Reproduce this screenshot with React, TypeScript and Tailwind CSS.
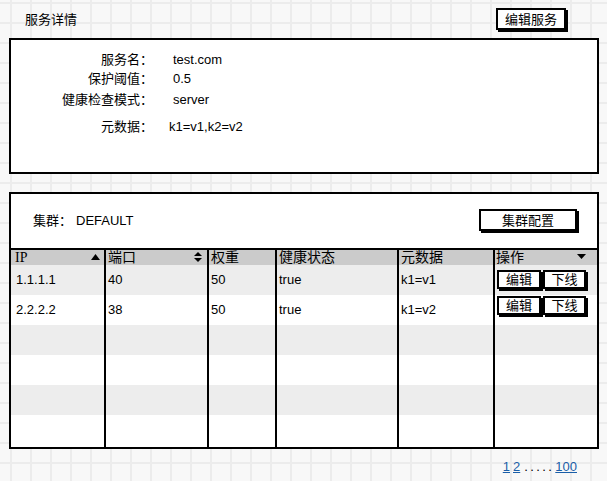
import React from 'react'

const cols = 'grid grid-cols-[93px_103px_68px_122px_96px_104px]'

const rows = [
  { ip: '1.1.1.1', port: '40', weight: '50', health: 'true', meta: 'k1=v1', btnTop: 'mt-[5px]' },
  { ip: '2.2.2.2', port: '38', weight: '50', health: 'true', meta: 'k1=v2', btnTop: 'mt-[1px]' },
]

function SmallBtn({ label, className }: { label: string; className?: string }) {
  return (
    <div
      className={`h-[19px] border-2 border-black bg-white shadow-[2px_2px_0_#000] flex items-center justify-center text-[13px] leading-none ${className || ''}`}
    >
      {label}
    </div>
  )
}

function Up() {
  return (
    <svg width="9" height="6" viewBox="0 0 9 6">
      <path d="M0 6 L4.5 0 L9 6 Z" fill="#000" />
    </svg>
  )
}

function Down() {
  return (
    <svg width="9" height="5" viewBox="0 0 9 5">
      <path d="M0 0 L9 0 L4.5 5 Z" fill="#000" />
    </svg>
  )
}

function UpDown() {
  return (
    <svg width="8" height="10" viewBox="0 0 8 10">
      <path d="M0 4 L4 0 L8 4 Z" fill="#000" />
      <path d="M0 6 L8 6 L4 10 Z" fill="#000" />
    </svg>
  )
}

export default function App() {
  const empty = [0, 1, 2, 3]

  return (
    <div className="w-[607px] h-[481px] overflow-hidden bg-[#f8f8f8] bg-[linear-gradient(to_right,#ececec_2px,transparent_2px),linear-gradient(to_bottom,#ececec_2px,transparent_2px)] bg-[size:20px_20px] bg-[position:10px_2px] text-black font-['Liberation_Sans','Noto_Sans_CJK_SC',sans-serif]">
      {/* 标题 */}
      <div className="flex items-start h-[38px]">
        <div className="ml-[25px] mt-[11px] text-[13px] leading-[18px]">服务详情</div>
        <button className="ml-auto mr-[41px] mt-[8px] w-[70px] h-[22px] border-2 border-black bg-white shadow-[2px_2px_0_#000] text-[13px] leading-none">
          编辑服务
        </button>
      </div>

      {/* 服务信息 */}
      <div className="ml-[9px] w-[590px] h-[136px] border-2 border-black bg-white pt-[10px] text-[13px]">
        <div className="flex h-[19px] items-center">
          <div className="w-[142px] text-right">服务名：</div>
          <div className="ml-[20px]">test.com</div>
        </div>
        <div className="flex h-[19px] items-center">
          <div className="w-[142px] text-right">保护阈值：</div>
          <div className="ml-[20px]">0.5</div>
        </div>
        <div className="flex h-[19px] items-center mt-[2px]">
          <div className="w-[142px] text-right">健康检查模式：</div>
          <div className="ml-[20px]">server</div>
        </div>
        <div className="flex h-[19px] items-center mt-[8px]">
          <div className="w-[142px] text-right">元数据：</div>
          <div className="ml-[16px]">k1=v1,k2=v2</div>
        </div>
      </div>

      {/* 集群 */}
      <div className="ml-[9px] mt-[18px] w-[590px] h-[257px] border-2 border-black bg-white flex flex-col">
        <div className="h-[56px] shrink-0 border-b-2 border-black flex items-center text-[13px]">
          <div className="ml-[22px]">集群：</div>
          <div className="ml-[4px]">DEFAULT</div>
          <button className="ml-auto mr-[20px] mt-[-2px] w-[98px] h-[22px] border-2 border-black bg-white shadow-[2px_2px_0_#000] text-[13px] leading-none">
            集群配置
          </button>
        </div>

        <div className={`${cols} h-[15px] shrink-0 bg-[#cbcbcb] text-[14px] leading-[15px]`}>
          <div className="pl-[4px] pr-[4px] flex items-start justify-between">
            <span className="font-['Liberation_Serif',serif]">IP</span>
            <span className="mt-[4px]"><Up /></span>
          </div>
          <div className="border-l-2 border-black pl-[2px] pr-[5px] flex items-start justify-between">
            <span>端口</span>
            <span className="mt-[2px]"><UpDown /></span>
          </div>
          <div className="border-l-2 border-black pl-[2px]">权重</div>
          <div className="border-l-2 border-black pl-[2px]">健康状态</div>
          <div className="border-l-2 border-black pl-[2px]">元数据</div>
          <div className="border-l-2 border-black pl-[1px] pr-[11px] flex items-start justify-between">
            <span>操作</span>
            <span className="mt-[4px]"><Down /></span>
          </div>
        </div>

        {rows.map((r, i) => (
          <div key={i} className={`${cols} h-[30px] shrink-0 text-[13px] ${i % 2 === 0 ? 'bg-[#ededed]' : 'bg-white'}`}>
            <div className="pl-[5px] flex items-center">{r.ip}</div>
            <div className="border-l-2 border-black pl-[2px] flex items-center">{r.port}</div>
            <div className="border-l-2 border-black pl-[2px] flex items-center">{r.weight}</div>
            <div className="border-l-2 border-black pl-[2px] flex items-center">{r.health}</div>
            <div className="border-l-2 border-black pl-[2px] flex items-center">{r.meta}</div>
            <div className="border-l-2 border-black pl-[2px] flex items-start">
              <SmallBtn label="编辑" className={`w-[44px] ${r.btnTop}`} />
              <SmallBtn label="下线" className={`w-[43px] ml-[2px] ${r.btnTop}`} />
            </div>
          </div>
        ))}

        {empty.map((n) => (
          <div
            key={n}
            className={`${cols} ${n === 3 ? 'flex-1' : 'h-[30px] shrink-0'} ${n % 2 === 0 ? 'bg-[#ededed]' : 'bg-white'}`}
          >
            <div />
            <div className="border-l-2 border-black" />
            <div className="border-l-2 border-black" />
            <div className="border-l-2 border-black" />
            <div className="border-l-2 border-black" />
            <div className="border-l-2 border-black" />
          </div>
        ))}
      </div>

      {/* 分页 */}
      <div className="flex justify-end mr-[30px] mt-[10px] text-[13px] leading-[16px]">
        <a className="text-[#1a5ea8] underline">1</a>
        <a className="ml-[3px] text-[#1a5ea8] underline">2</a>
        <span className="ml-[4px] mr-[1px] tracking-[2.4px]">.....</span>
        <a className="text-[#1a5ea8] underline">100</a>
      </div>
    </div>
  )
}
